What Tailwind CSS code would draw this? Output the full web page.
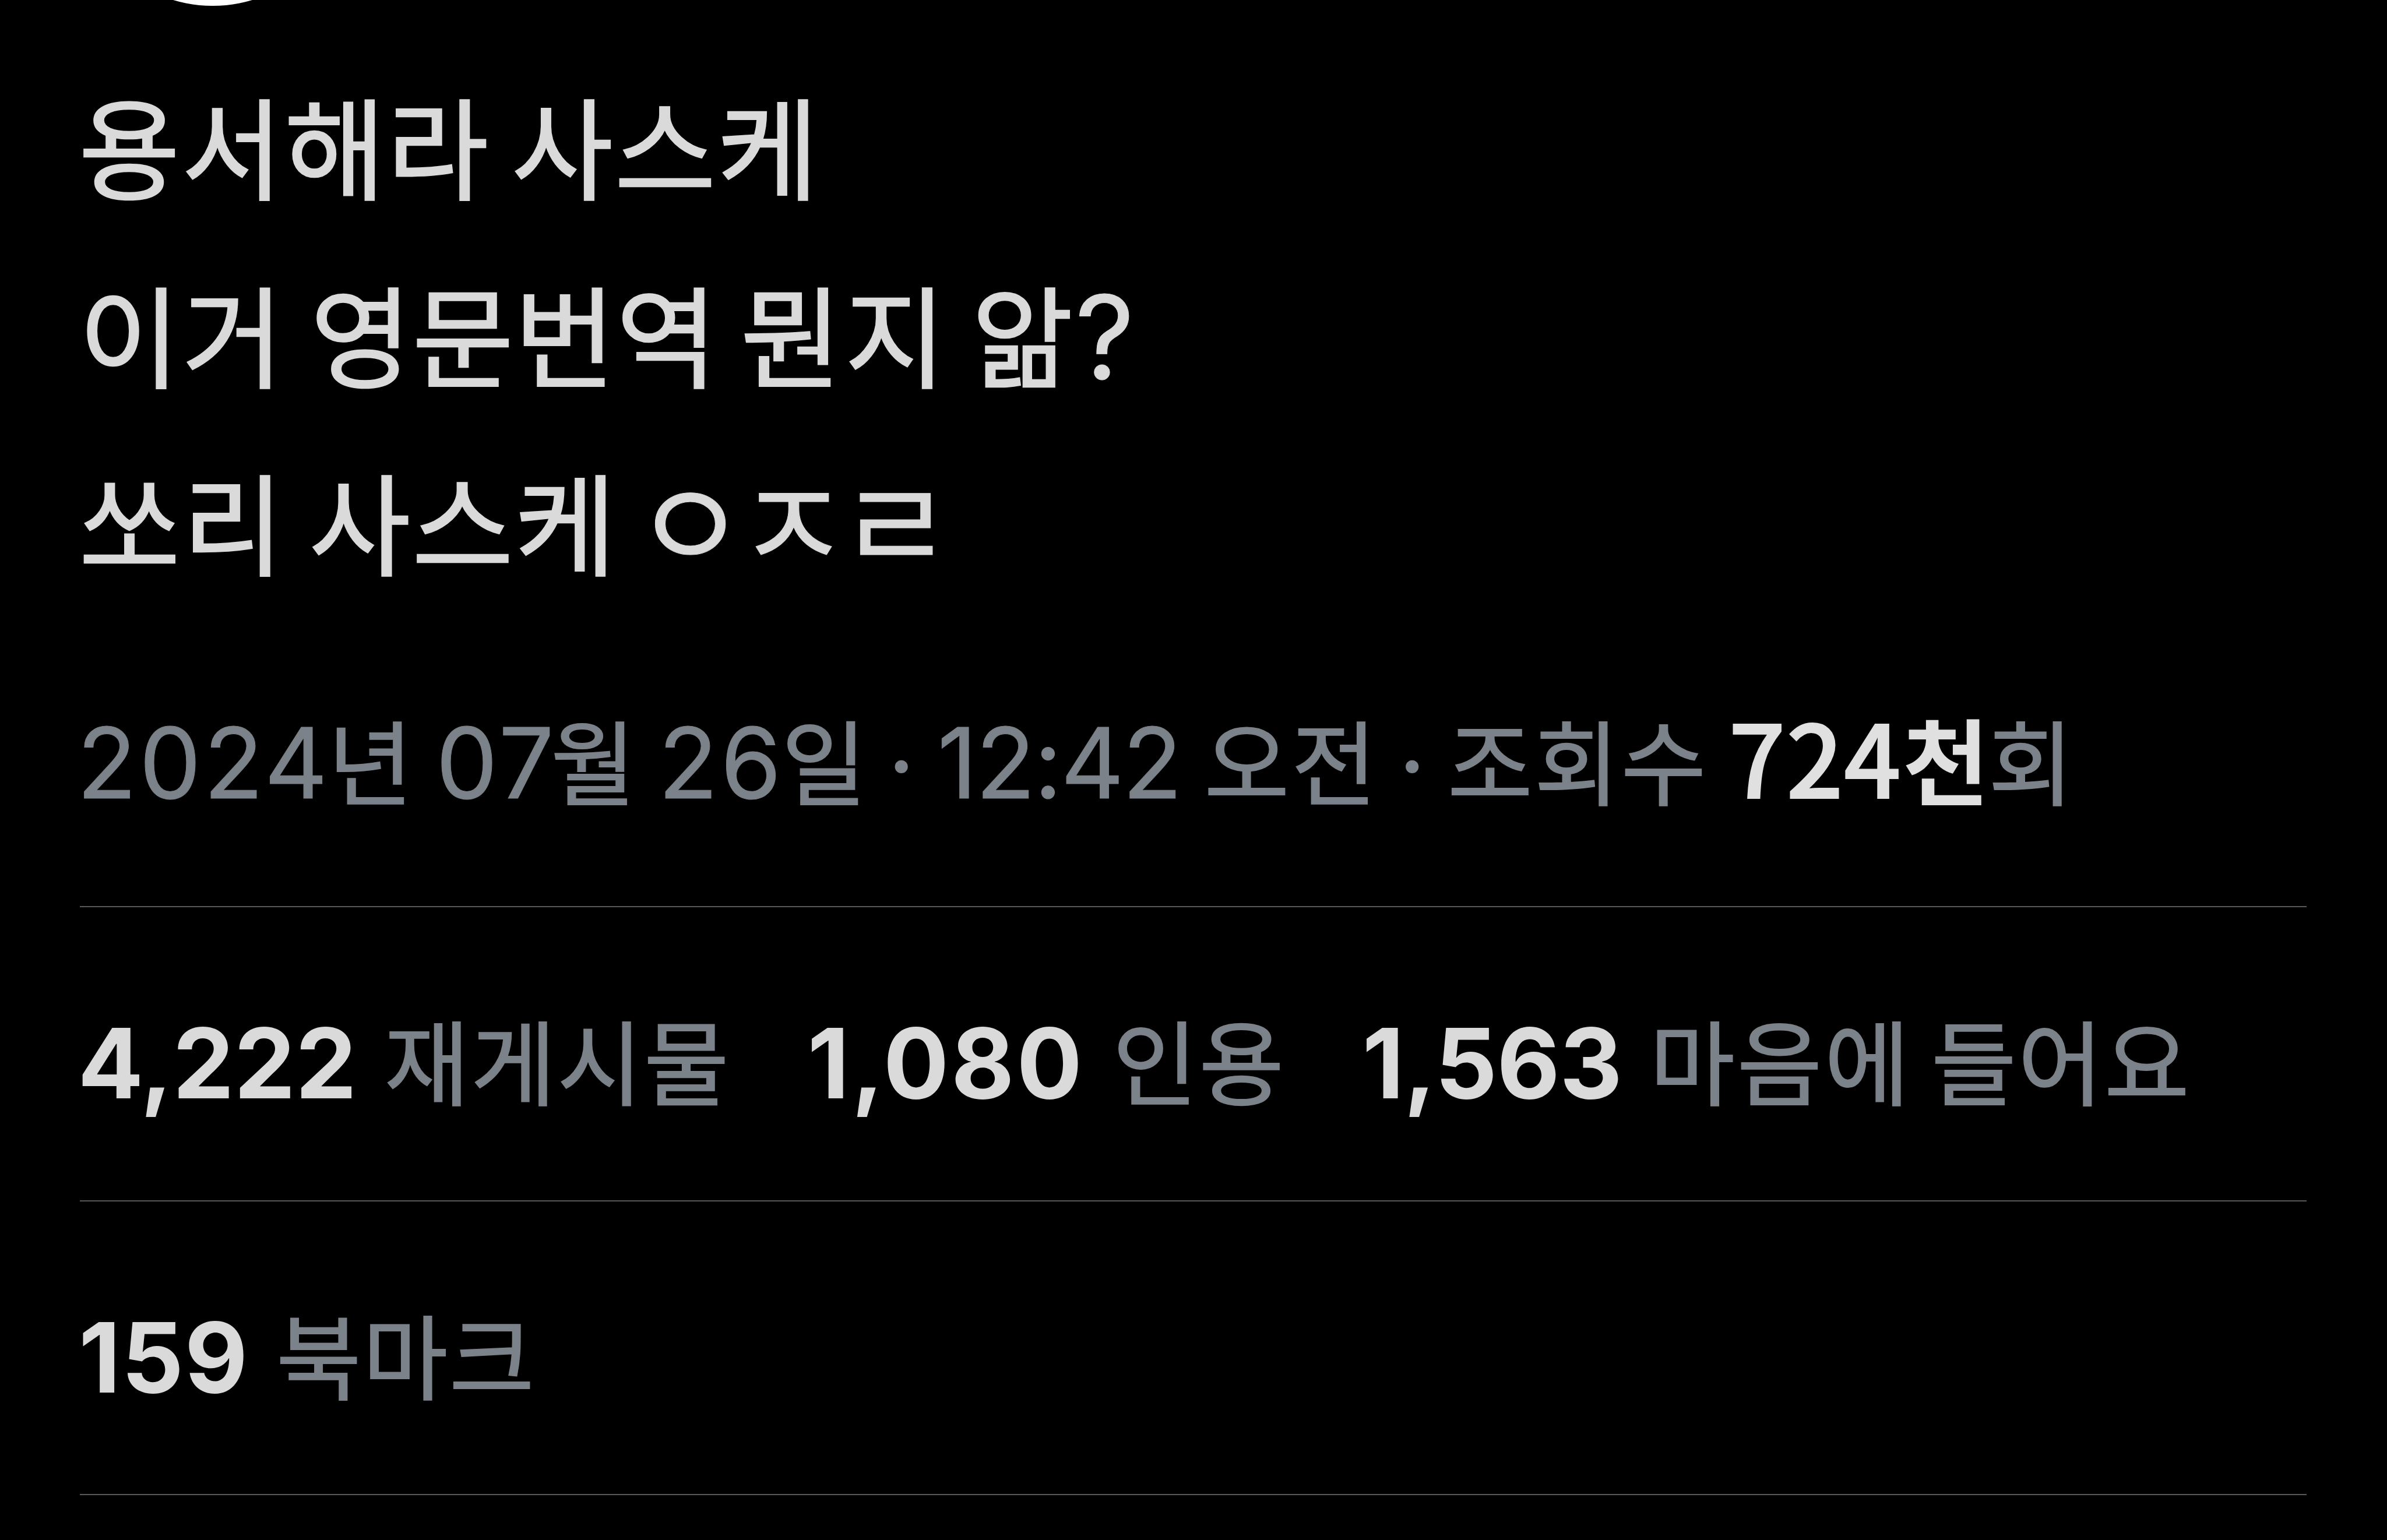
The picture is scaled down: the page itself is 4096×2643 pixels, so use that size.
<!DOCTYPE html>
<html lang="ko">
<head>
<meta charset="utf-8">
<title>게시물</title>
<script src="https://cdn.jsdelivr.net/npm/@tailwindcss/browser@4"></script>
</head>
<body class="bg-black">
<main class="relative flex h-[2643px] w-[4096px] flex-col overflow-hidden bg-black pt-[85px] font-['Noto_Sans_CJK_KR',sans-serif] whitespace-nowrap">
  <!-- avatar, scrolled mostly out of view -->
  <div class="absolute -top-[462px] left-[129px] size-[472px] rounded-full bg-white"></div>

  <!-- post body -->
  <div class="flex flex-col text-[189px] leading-[322.5px] tracking-[2.5px] text-[#dadada] [-webkit-text-stroke:2.5px_#dadada]">
    <p class="flex h-[322.5px] items-baseline pl-[135px]">
      <span class="w-[743px] shrink-0">용서해라</span><span>사스케</span>
    </p>
    <p class="flex h-[322.5px] items-baseline pl-[135px]">
      <span class="w-[397.5px] shrink-0 tracking-[3.5px]">이거</span><span class="w-[738px] shrink-0 tracking-[1px]">영문번역</span><span class="w-[397px] shrink-0 tracking-[5px]">뭔지</span><span class="w-[177px] shrink-0">앎</span><span class="font-[Inter] text-[200px] [-webkit-text-stroke:1px_#dadada]">?</span>
    </p>
    <p class="flex h-[322.5px] items-baseline pl-[135.5px]">
      <span class="w-[395px] shrink-0 tracking-[3.5px]">쏘리</span><span class="w-[556px] shrink-0">사스케</span><span class="relative top-[6px] text-[213px] leading-[290px] tracking-[-20px] [-webkit-text-stroke:1px_#dadada]">ㅇㅈㄹ</span>
    </p>
  </div>

  <!-- date and views -->
  <div class="mt-[127.5px] flex h-[230px] items-baseline pl-[132px] text-[158.5px] leading-[230px] tracking-[2px] text-[#7b8289] [-webkit-text-stroke:2px_#7b8289]">
    <span class="w-[430.5px] shrink-0 font-[Inter] text-[168px] tracking-[4.5px] [-webkit-text-stroke:1px_#7b8289]">2024</span><span class="w-[185.5px] shrink-0">년</span><span class="w-[197px] shrink-0 font-[Inter] text-[168px] tracking-[5px] [-webkit-text-stroke:1px_#7b8289]">07</span><span class="w-[184.5px] shrink-0">월</span><span class="w-[211.5px] shrink-0 font-[Inter] text-[168px] tracking-[4.5px] [-webkit-text-stroke:1px_#7b8289]">26</span><span class="w-[181.5px] shrink-0">일</span><span class="relative top-[4px] w-[86px] shrink-0 font-[Inter] text-[168px] [-webkit-text-stroke:0]">·</span><span class="w-[458px] shrink-0 font-[Inter] text-[168px] tracking-[-2.5px] [font-feature-settings:'calt'_0] [-webkit-text-stroke:1px_#7b8289]">12:42</span><span class="w-[332.5px] shrink-0 tracking-[4px]">오전</span><span class="relative top-[4px] w-[85px] shrink-0 font-[Inter] text-[168px] [-webkit-text-stroke:0]">·</span><span class="w-[482px] shrink-0 tracking-[3px]">조회수</span><span class="w-[299px] shrink-0 text-[172px] font-medium tracking-[1px] text-[#e0e0e0] [-webkit-text-stroke:2px_#e0e0e0]">724</span><span class="w-[147px] shrink-0 text-[161px] font-bold text-[#e0e0e0] [-webkit-text-stroke:0]">천</span><span>회</span>
  </div>

  <div class="mt-[145px] ml-[136.5px] h-[2px] w-[3821.5px] shrink-0 bg-[#585858]"></div>

  <!-- engagement counts -->
  <div class="mt-[144px] flex h-[230px] items-baseline pl-[133.5px] text-[158.5px] leading-[230px] tracking-[2.7px] text-[#7b8289] [-webkit-text-stroke:2px_#7b8289]">
    <span class="w-[526px] shrink-0 font-[Inter] text-[167px] font-bold tracking-[0px] text-[#dadada] [-webkit-text-stroke:0]">4,222</span><span class="w-[726px] shrink-0">재게시물</span><span class="w-[523.5px] shrink-0 font-[Inter] text-[167px] font-bold tracking-[3.7px] text-[#dadada] [-webkit-text-stroke:0]">1,080</span><span class="w-[428.5px] shrink-0">인용</span><span class="w-[493.5px] shrink-0 font-[Inter] text-[167px] font-bold tracking-[-0.8px] text-[#dadada] [-webkit-text-stroke:0]">1,563</span><span class="w-[483px] shrink-0 tracking-[4px]">마음에</span><span>들어요</span>
  </div>

  <div class="mt-[129px] ml-[136.5px] h-[2px] w-[3821.5px] shrink-0 bg-[#54585c]"></div>

  <!-- bookmarks -->
  <div class="mt-[144px] flex h-[230px] items-baseline pl-[135px] text-[158.5px] leading-[230px] tracking-[2.7px] text-[#7b8289] [-webkit-text-stroke:2px_#7b8289]">
    <span class="w-[339px] shrink-0 font-[Inter] text-[167px] font-bold tracking-[1.5px] text-[#dadada] [-webkit-text-stroke:0]">159</span><span>북마크</span>
  </div>

  <div class="mt-[128px] ml-[136.5px] h-[2px] w-[3821.5px] shrink-0 bg-[#585858]"></div>
</main>
</body>
</html>
